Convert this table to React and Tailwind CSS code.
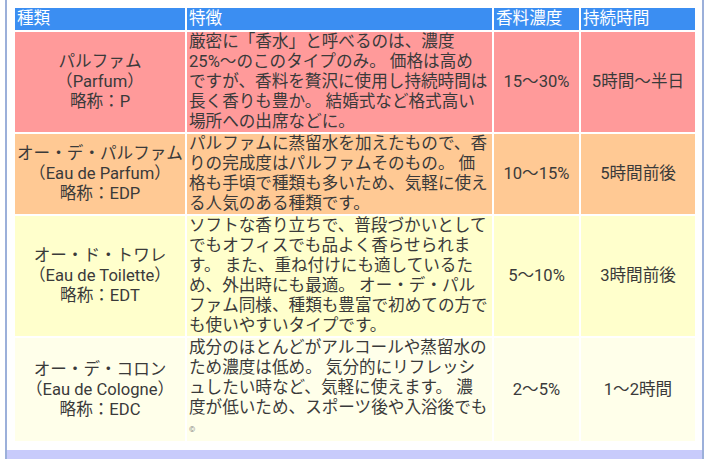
import React from "react";

const rows = [
  {
    bg: "bg-[#ff9a9a]",
    name: ["パルファム", "（Parfum）", "略称：P"],
    desc: [
      "厳密に「香水」と呼べるのは、濃度",
      "25%～のこのタイプのみ。 価格は高め",
      "ですが、香料を贅沢に使用し持続時間は",
      "長く香りも豊か。 結婚式など格式高い",
      "場所への出席などに。",
    ],
    conc: "15～30%",
    time: "5時間～半日",
  },
  {
    bg: "bg-[#ffc994]",
    name: ["オー・デ・パルファム", "（Eau de Parfum）", "略称：EDP"],
    desc: [
      "パルファムに蒸留水を加えたもので、香",
      "りの完成度はパルファムそのもの。 価",
      "格も手頃で種類も多いため、気軽に使え",
      "る人気のある種類です。",
    ],
    conc: "10～15%",
    time: "5時間前後",
  },
  {
    bg: "bg-[#ffffcc]",
    name: ["オー・ド・トワレ", "（Eau de Toilette）", "略称：EDT"],
    desc: [
      "ソフトな香り立ちで、普段づかいとして",
      "でもオフィスでも品よく香らせられま",
      "す。 また、重ね付けにも適しているた",
      "め、外出時にも最適。 オー・デ・パル",
      "ファム同様、種類も豊富で初めての方で",
      "も使いやすいタイプです。",
    ],
    conc: "5～10%",
    time: "3時間前後",
  },
  {
    bg: "bg-[#ffffea]",
    name: ["オー・デ・コロン", "（Eau de Cologne）", "略称：EDC"],
    desc: [
      "成分のほとんどがアルコールや蒸留水の",
      "ため濃度は低め。 気分的にリフレッシ",
      "ュしたい時など、気軽に使えます。 濃",
      "度が低いため、スポーツ後や入浴後でも",
    ],
    conc: "2～5%",
    time: "1～2時間",
    copy: true,
  },
];

export default function App() {
  return (
    <div className="w-[720px] h-[459px] overflow-hidden bg-white font-['Roboto','Noto_Sans_CJK_JP',sans-serif] text-[16.6px] leading-[20px] text-[#3a3a3a]">
      <div className="ml-[5px] w-[699px] h-full border-x-2 border-[#9cb0da] flex flex-col">
        <div className="pt-[6px] pl-[6px] pb-[7px]">
          <table className="table-fixed border-separate border-spacing-[2px] w-[684px]">
            <colgroup>
              <col className="w-[170px]" />
              <col className="w-[305px]" />
              <col className="w-[85px]" />
              <col className="w-[114px]" />
            </colgroup>
            <thead>
              <tr className="bg-[#3b8ef2] text-white">
                <th className="text-left font-normal px-[2px] py-[1px]">種類</th>
                <th className="text-left font-normal px-[2px] py-[1px]">特徴</th>
                <th className="text-left font-normal px-[2px] py-[1px]">香料濃度</th>
                <th className="text-left font-normal px-[2px] py-[1px]">持続時間</th>
              </tr>
            </thead>
            <tbody>
              {rows.map((r) => (
                <tr key={r.conc} className={r.bg}>
                  <td className="text-center align-middle px-[1px] whitespace-nowrap">
                    {r.name.map((l) => (
                      <div key={l}>{l}</div>
                    ))}
                  </td>
                  <td className="align-middle px-[2px] whitespace-nowrap">
                    {r.desc.map((l) => (
                      <div key={l}>{l}</div>
                    ))}
                    {r.copy && (
                      <div className="text-[8px] leading-[23px] text-[#888]">©</div>
                    )}
                  </td>
                  <td className="text-center align-middle">{r.conc}</td>
                  <td className="text-center align-middle">{r.time}</td>
                </tr>
              ))}
            </tbody>
          </table>
        </div>
        <div className="flex-1 bg-[#c8cbfb]" />
      </div>
    </div>
  );
}
